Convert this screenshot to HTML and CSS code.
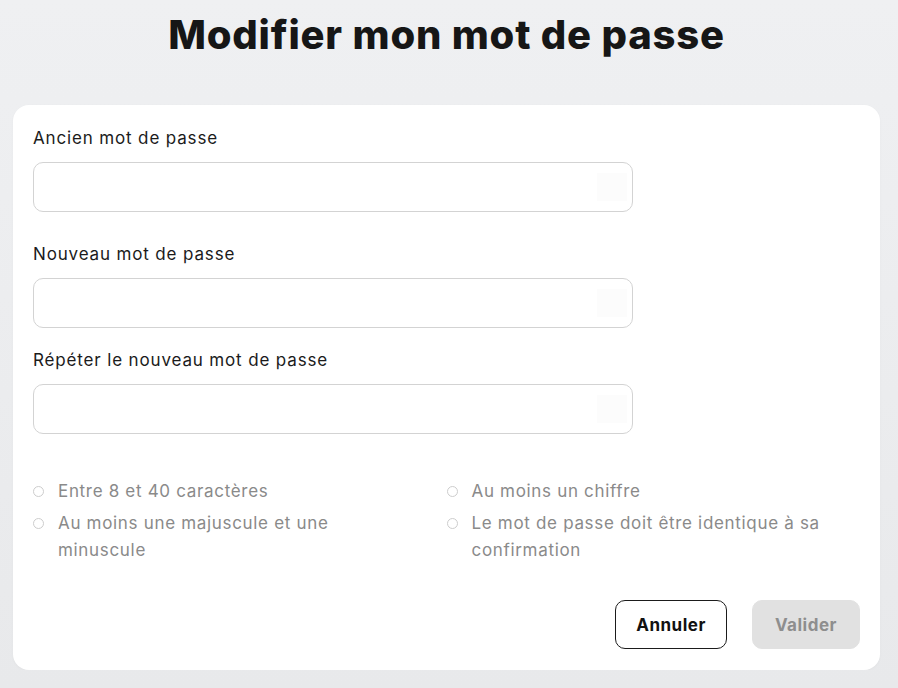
FILE: index.html
```html
<!DOCTYPE html>
<html lang="fr">
    <head>
        <meta charset="UTF-8" />
        <meta name="viewport" content="width=device-width, initial-scale=1.0" />
        <title>Modifier mon mot de passe</title>
        <link rel="stylesheet" href="styles.css">
    </head>
    <body>
        <main class="page">
            <h1 class="page-title">Modifier mon mot de passe</h1>
            <form class="card" id="password-form">
                <div class="field field-old">
                    <label for="p-old">Ancien mot de passe</label>
                    <input type="password" name="old" id="p-old" />
                </div>
                <div class="field field-new">
                    <label for="p-new">Nouveau mot de passe</label>
                    <input type="password" name="new" id="p-new" />
                </div>
                <div class="field">
                    <label for="p-confirm">Répéter le nouveau mot de passe</label>
                    <input type="password" name="confirm" id="p-confirm" />
                </div>
                <ul class="rules">
                    <li><span class="dot"></span><span class="rule-text">Entre 8 et 40 caractères</span></li>
                    <li><span class="dot"></span><span class="rule-text">Au moins un chiffre</span></li>
                    <li><span class="dot"></span><span class="rule-text">Au moins une majuscule et une minuscule</span></li>
                    <li><span class="dot"></span><span class="rule-text">Le mot de passe doit être identique à sa confirmation</span></li>
                </ul>
                <div class="actions">
                    <button type="reset" class="btn btn-outline">Annuler</button>
                    <button type="submit" class="btn btn-primary" disabled>Valider</button>
                </div>
            </form>
        </main>
    </body>
</html>
```

FILE: styles.css
```css
* {
    box-sizing: border-box;
    outline: none;
}
html,
body {
    margin: 0;
    min-height: 100%;
}
body {
    background: linear-gradient(#eff0f2, #e8e9eb);
    color: #1b1b1b;
    font-family: Inter, "Open Sans", Arial, sans-serif;
}
.page {
    padding: 0 18px 0 13px;
}
.page-title {
    margin: 11px 0 46px;
    font-size: 40px;
    line-height: 48px;
    font-weight: 800;
    letter-spacing: 0.02em;
    text-align: center;
    color: #161616;
}
.card {
    background-color: #fff;
    border-radius: 16px;
    padding: 21px 20px;
    box-shadow: 0 1px 3px rgba(0, 0, 0, 0.03);
}
.field {
    display: flex;
    flex-direction: column;
}
.field-old {
    margin-bottom: 30px;
}
.field-new {
    margin-bottom: 20px;
}
.field label {
    font-size: 17px;
    line-height: 24px;
    margin-bottom: 12px;
    letter-spacing: 0.05em;
}
.field input {
    width: 600px;
    height: 50px;
    padding: 0 14px;
    border: 1px solid #d3d3d3;
    border-radius: 10px;
    font-family: inherit;
    font-size: 16px;
    background: #fff linear-gradient(#fcfcfc, #fcfcfc) no-repeat right 5px center / 30px 28px;
}
.rules {
    list-style: none;
    margin: 44px 0 0;
    padding: 0;
    display: grid;
    grid-template-columns: 1fr 1fr;
    row-gap: 5px;
}
.rules li {
    display: flex;
    align-items: flex-start;
    gap: 14px;
    font-size: 17px;
    line-height: 27px;
    color: #8a8a8a;
    letter-spacing: 0.04em;
}
.rule-text {
    max-width: 356px;
}
.dot {
    flex: none;
    width: 11px;
    height: 11px;
    margin-top: 8px;
    border: 1px solid #cdcdcd;
    border-radius: 50%;
}
.actions {
    display: flex;
    justify-content: flex-end;
    gap: 25px;
    margin-top: 36px;
}
.btn {
    height: 49px;
    padding: 0 20px;
    border-radius: 10px;
    font-family: inherit;
    font-size: 17px;
    font-weight: 700;
    letter-spacing: 0.03em;
}
.btn-outline {
    background-color: #fff;
    border: 1px solid #1b1b1b;
    color: #111;
    cursor: pointer;
}
.btn-primary {
    padding: 0 22px;
    background-color: #e1e1e1;
    border: 1px solid #e1e1e1;
    color: #8e8e8e;
}
```
